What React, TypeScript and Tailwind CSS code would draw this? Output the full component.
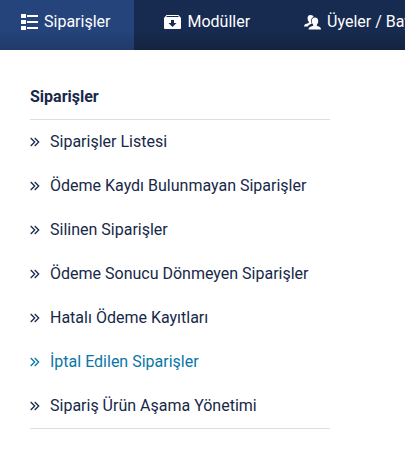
import React from 'react';
import clsx from 'clsx';

const links = [
  'Siparişler Listesi',
  'Ödeme Kaydı Bulunmayan Siparişler',
  'Silinen Siparişler',
  'Ödeme Sonucu Dönmeyen Siparişler',
  'Hatalı Ödeme Kayıtları',
  'İptal Edilen Siparişler',
  'Sipariş Ürün Aşama Yönetimi',
];

const ACTIVE_LINK = 'İptal Edilen Siparişler';

function ListIcon() {
  return (
    <svg width="17" height="16" viewBox="0 0 17 16" fill="currentColor">
      <path d="M0 0h5v4H0zM0 6h5v4H0zM0 12h5v4H0zM6 1h11v2H6zM6 7h11v2H6zM6 13h11v2H6z" />
    </svg>
  );
}

function ArchiveIcon() {
  return (
    <svg width="17" height="16" viewBox="0 0 17 16" fill="currentColor">
      <path
        fillRule="evenodd"
        d="M2.500 1h12L17 4v10a1 1 0 0 1-1 1H1a1 1 0 0 1-1-1V4zM3 2 2 3h13l-1-1zM7 6v3H4.500l4 4 4-4H10V6z"
      />
    </svg>
  );
}

function UsersIcon() {
  return (
    <svg width="17" height="16" viewBox="0 0 17 16" fill="currentColor">
      <path d="M6.500 1C8.200 1 9.200 1.700 9.600 2.900 7.900 3.500 7 5 7.100 7.200c.1 1 .4 1.900.9 2.400-1.800.7-3.300 1.400-4.200 2.800H0c0-2 1.500-2.400 4.600-3.400.4-.2.400-.9.100-1.400C4 6.800 3.600 5.800 3.600 4.200 3.600 2.200 4.600 1 6.500 1z" />
      <path d="M11 3.500c2.100 0 3.200 1.400 3.200 3.500 0 1.500-.4 2.700-1.200 3.500-.3.500-.2 1.200.2 1.400 2.600.8 3.800 1.400 3.800 3.600H4.500c0-2.200 1.500-2.800 4.300-3.600.4-.2.500-.9.200-1.400C8.200 9.700 7.800 8.500 7.800 7c0-2.100 1.100-3.500 3.200-3.500z" />
    </svg>
  );
}

function DoubleArrowIcon() {
  return (
    <svg
      width="10"
      height="10"
      viewBox="0 0 10 10"
      fill="none"
      stroke="currentColor"
      strokeWidth="1.300"
      className="shrink-0"
    >
      <path d="M.7 1 4.700 5l-4 4M4.700 1l4 4-4 4" />
    </svg>
  );
}

const tabs = [
  { label: 'Siparişler', icon: <ListIcon />, active: true },
  { label: 'Modüller', icon: <ArchiveIcon />, active: false },
  { label: 'Üyeler / Bayiler', icon: <UsersIcon />, active: false },
];

export default function App() {
  return (
    <div className="min-h-screen overflow-hidden bg-white font-['Roboto',sans-serif] text-[#172849]">
      <nav className="flex h-[50px] overflow-hidden bg-linear-to-b from-[#172a50] from-60% to-[#14233f] text-white">
        {tabs.map(tab => (
          <a
            key={tab.label}
            href="#"
            className={clsx(
              'flex shrink-0 items-center gap-1.5 pr-6 pb-[7px]',
              tab.active
                ? 'bg-linear-to-b from-[#25447b] from-60% to-[#203a6a] pl-[21px]'
                : 'pl-[30px]'
            )}
          >
            {tab.icon}
            {tab.label}
          </a>
        ))}
      </nav>

      <main className="px-[30px] pt-6">
        <section className="max-w-[300px] border-b border-[#dddddd]">
          <h2 className="border-b border-[#dddddd] pt-[11px] pb-2.5 font-bold">
            Siparişler
          </h2>
          <ul>
            {links.map(link => (
              <li key={link}>
                <a
                  href="#"
                  className={clsx(
                    'flex h-11 items-center gap-2.5 whitespace-nowrap',
                    link === ACTIVE_LINK && 'text-[#0876a8]'
                  )}
                >
                  <DoubleArrowIcon />
                  {link}
                </a>
              </li>
            ))}
          </ul>
        </section>
      </main>
    </div>
  );
}
